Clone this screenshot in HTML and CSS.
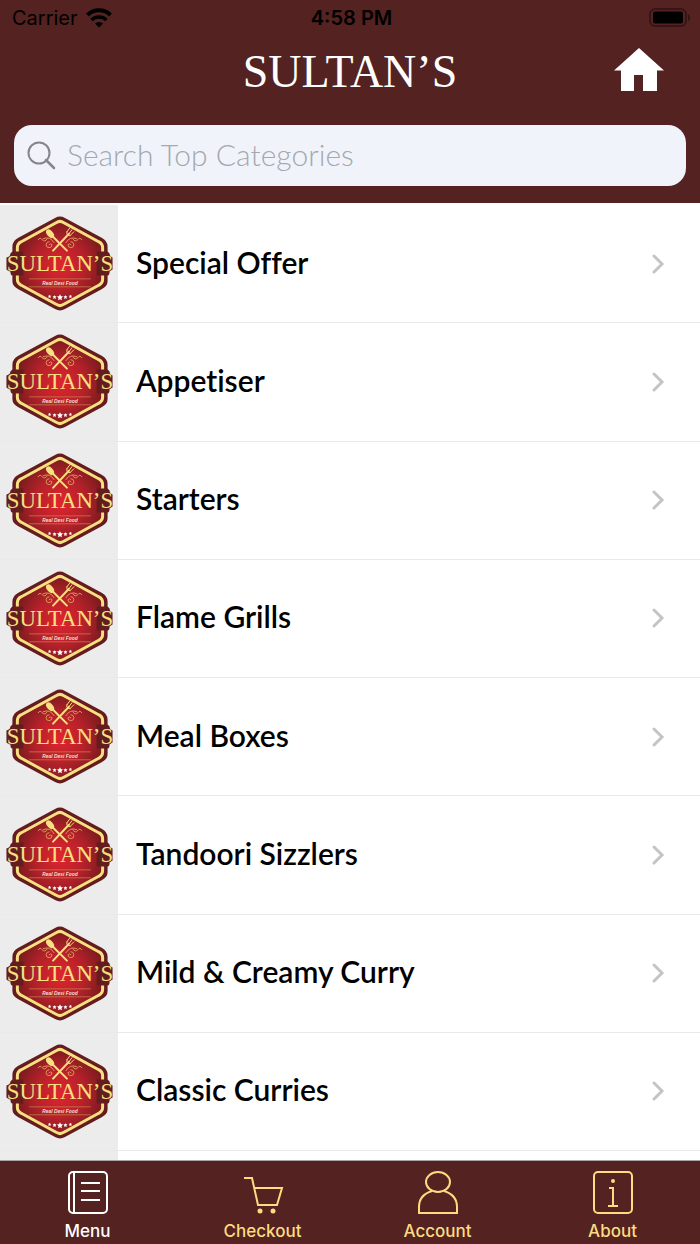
FILE: index.html
```html
<!DOCTYPE html>
<html lang="en">
<head>
    <meta charset="UTF-8">
    <meta name="viewport" content="width=device-width, initial-scale=1.0">
    <title>Sultan's - Menu</title>
    <link rel="stylesheet" href="styles.css">
</head>
<body>

    <header class="header">
        <div class="status">
            <div class="carrier">
                <span>Carrier</span>
                <svg width="26" height="20" viewBox="0 0 26 20">
                    <path d="M1.500 7 A16.500 16.500 0 0 1 24.500 7" fill="none" stroke="#000" stroke-width="4"/>
                    <path d="M5.500 12 A11 11 0 0 1 20.500 12" fill="none" stroke="#000" stroke-width="3.500"/>
                    <path d="M9 15.500 A6 6 0 0 1 17 15.500 L13 19.500 Z"/>
                </svg>
            </div>
            <span class="time">4:58 PM</span>
            <svg class="battery" width="42" height="20" viewBox="0 0 42 20">
                <rect x="1" y="1" width="36" height="17" rx="5" fill="none" stroke="#301314" stroke-width="1.500"/>
                <rect x="4" y="3.500" width="30" height="12" rx="2"/>
                <path d="M39 6 Q41 7 41 9.500 Q41 12 39 13 Z" fill="#301314"/>
            </svg>
        </div>
        <div class="title-bar">
            <h1>SULTAN’S</h1>
            <a class="home" href="#home" aria-label="Home">
                <svg width="50" height="44" viewBox="0 0 50 44">
                    <path d="M25 0 L50 22.500 H43 V43 H29 V27 H20 V43 H7 V22.500 H0 Z" fill="#fff"/>
                </svg>
            </a>
        </div>
        <form class="search">
            <svg width="30" height="30" viewBox="0 0 30 30">
                <circle cx="12" cy="12" r="10.500" fill="none" stroke="#85858a" stroke-width="2"/>
                <path d="M19 19 L27 27" stroke="#85858a" stroke-width="2.500" stroke-linecap="round"/>
            </svg>
            <input type="text" id="search" name="search" placeholder="Search Top Categories" aria-label="Search Top Categories">
        </form>
    </header>

    <main class="list">
        <a class="row" href="#special-offer">
            <span class="thumb">
                <svg viewBox="0 0 118 118">
                    <defs>
                        <radialGradient id="badgeFill" gradientUnits="userSpaceOnUse" cx="60" cy="61" r="50">
                            <stop offset="0" stop-color="#e0252f"/>
                            <stop offset="0.5" stop-color="#b6212a"/>
                            <stop offset="1" stop-color="#6b1a1c"/>
                        </radialGradient>
                    </defs>
                    <g id="badge">
                        <path d="M55 13 Q60 10 65 13 L102 33 Q108 36 108 42 V77 Q108 82 102 85 L65 105 Q60 108 55 105 L18 85 Q12 82 12 77 V42 Q12 36 18 33 Z" fill="#641c1e"/>
                        <path d="M56 18 Q60 15 64 18 L99 37 Q103 39 103 43 V75 Q103 79 99 81 L64 100 Q60 103 56 100 L21 81 Q17 79 17 75 V43 Q17 39 21 37 Z" fill="url(#badgeFill)" stroke="#f8e080" stroke-width="3"/>
                        <path d="M12 47 H23 V71 H12 Q10 71 10 67 Q8 67 6 65 V53 Q10 52 10 49 Z M97 47 H108 L110 49 Q110 52 113 53 V65 Q110 67 110 67 Q110 71 108 71 H97 Z" fill="#641c1e"/>
                        <!-- spoon and fork -->
                        <g stroke="#f8e080" fill="none" stroke-linecap="round">
                            <path d="M52 31 L67 46" stroke-width="2"/>
                            <path d="M53 46 L69 29" stroke-width="2"/>
                            <ellipse cx="50" cy="29" rx="3" ry="5" transform="rotate(-42 50 29)" fill="#f8e080" stroke="none"/>
                            <path d="M67 27 L70 23 M69 29 L72 25 M70 31 L74 27 M67 27 Q66 31 70 31" stroke-width="1"/>
                            <g stroke="#d8955a" stroke-width="1">
                                <path d="M38 35 Q40 32 42 35 Q45 38 47 34 M43 34 Q50 31 54 38 M49 37 a3 3 0 1 0 3 3 a2 2 0 0 0 -3 0"/>
                                <path d="M82 35 Q80 32 78 35 Q75 38 73 34 M77 34 Q70 31 66 38 M71 37 a3 3 0 1 1 -3 3 a2 2 0 0 1 3 0"/>
                            </g>
                        </g>
                        <text class="badge-name" x="60" y="67" text-anchor="middle">SULTAN’S</text>
                        <path d="M29 74.500 H91 M29 82.500 H91" stroke="#c98a50" stroke-width="0.700"/>
                        <text class="badge-tag" x="60" y="81" text-anchor="middle">Real Desi Food</text>
                        <g fill="#fff">
                            <path d="M60 90 L61 92 L63 92 L61.500 94 L62 96 L60 95 L58 96 L58.500 94 L57 92 L59 92 Z"/>
                            <path d="M54.500 91 l.7 1 h1.300 l-1 1.200 .4 1.500 -1.400 -.7 -1.400 .7 .4 -1.500 -1 -1.200 h1.300 Z M65.500 91 l.7 1 h1.300 l-1 1.200 .4 1.500 -1.400 -.7 -1.400 .7 .4 -1.500 -1 -1.200 h1.300 Z M49.500 90.500 l.6 1 h1.200 l-1 1 .4 1.300 -1.200 -.6 -1.200 .6 .4 -1.300 -1 -1 h1.200 Z M70.500 90.500 l.6 1 h1.200 l-1 1 .4 1.300 -1.200 -.6 -1.200 .6 .4 -1.300 -1 -1 h1.200 Z"/>
                        </g>
                    </g>
                </svg>
            </span>
            <span class="name">Special Offer</span>
            <svg class="arrow" viewBox="0 0 14 22"><path id="chevron" d="M3 3 L11 11 L3 19"/></svg>
        </a>
        <a class="row" href="#appetiser">
            <span class="thumb"><svg viewBox="0 0 118 118"><use href="#badge"/></svg></span>
            <span class="name">Appetiser</span>
            <svg class="arrow" viewBox="0 0 14 22"><use href="#chevron"/></svg>
        </a>
        <a class="row" href="#starters">
            <span class="thumb"><svg viewBox="0 0 118 118"><use href="#badge"/></svg></span>
            <span class="name">Starters</span>
            <svg class="arrow" viewBox="0 0 14 22"><use href="#chevron"/></svg>
        </a>
        <a class="row" href="#flame-grills">
            <span class="thumb"><svg viewBox="0 0 118 118"><use href="#badge"/></svg></span>
            <span class="name">Flame Grills</span>
            <svg class="arrow" viewBox="0 0 14 22"><use href="#chevron"/></svg>
        </a>
        <a class="row" href="#meal-boxes">
            <span class="thumb"><svg viewBox="0 0 118 118"><use href="#badge"/></svg></span>
            <span class="name">Meal Boxes</span>
            <svg class="arrow" viewBox="0 0 14 22"><use href="#chevron"/></svg>
        </a>
        <a class="row" href="#tandoori-sizzlers">
            <span class="thumb"><svg viewBox="0 0 118 118"><use href="#badge"/></svg></span>
            <span class="name">Tandoori Sizzlers</span>
            <svg class="arrow" viewBox="0 0 14 22"><use href="#chevron"/></svg>
        </a>
        <a class="row" href="#mild-creamy-curry">
            <span class="thumb"><svg viewBox="0 0 118 118"><use href="#badge"/></svg></span>
            <span class="name">Mild &amp; Creamy Curry</span>
            <svg class="arrow" viewBox="0 0 14 22"><use href="#chevron"/></svg>
        </a>
        <a class="row" href="#classic-curries">
            <span class="thumb"><svg viewBox="0 0 118 118"><use href="#badge"/></svg></span>
            <span class="name">Classic Curries</span>
            <svg class="arrow" viewBox="0 0 14 22"><use href="#chevron"/></svg>
        </a>
    </main>
    <div class="next-row"></div>

    <nav class="tabs">
        <a class="tab active" href="#menu">
            <svg viewBox="0 0 42 44">
                <rect x="2" y="1" width="38" height="41" rx="4"/>
                <path d="M7 1 V42 M14 12 H33 M14 20 H33 M14 29 H33"/>
            </svg>
            Menu
        </a>
        <a class="tab" href="#checkout">
            <svg viewBox="0 0 42 44">
                <path d="M2 7 H10 L16 34 H35 L40 17 H12"/>
                <circle class="dot" cx="18" cy="40" r="2.500"/>
                <circle class="dot" cx="31" cy="40" r="2.500"/>
            </svg>
            Checkout
        </a>
        <a class="tab" href="#account">
            <svg viewBox="0 0 42 44">
                <ellipse cx="21" cy="11" rx="12" ry="10"/>
                <path d="M15 20 Q2 24 2 36 V42 H40 V36 Q40 24 27 20"/>
            </svg>
            Account
        </a>
        <a class="tab" href="#about">
            <svg viewBox="0 0 42 44">
                <rect x="2" y="1" width="38" height="41" rx="4"/>
                <path d="M17 17 H21 V35 M16 35 H26"/>
                <circle class="dot" cx="21" cy="10" r="2"/>
            </svg>
            About
        </a>
    </nav>

</body>
</html>
```

FILE: styles.css
```css
* {
    box-sizing: border-box;
}
body {
    font-family: Lato, "Open Sans", sans-serif;
    background-color: #fff;
    margin: 0;
    min-height: 100vh;
    display: flex;
    flex-direction: column;
}
a {
    color: inherit;
    text-decoration: none;
}
svg {
    display: block;
    flex-shrink: 0;
}

/* header */
.header {
    background-color: #532221;
    padding-bottom: 17px;
}
.status {
    display: grid;
    grid-template-columns: 1fr auto 1fr;
    align-items: center;
    height: 36px;
    padding: 0 9px 0 12px;
    font-family: Inter, sans-serif;
    font-size: 20px;
    color: #000;
}
.carrier {
    display: flex;
    align-items: center;
    gap: 8px;
}
.time {
    font-weight: 600;
}
.battery {
    justify-self: end;
}
.title-bar {
    display: grid;
    grid-template-columns: 1fr auto 1fr;
    align-items: center;
    height: 72px;
    padding: 0 36px;
}
h1 {
    grid-column: 2;
    margin: 0;
    color: #fff;
    font-family: "Liberation Serif", serif;
    font-size: 46px;
    font-weight: normal;
    line-height: 72px;
}
.home {
    justify-self: end;
    padding-bottom: 4px;
}
.search {
    display: flex;
    align-items: center;
    gap: 10px;
    height: 61px;
    margin: 17px 14px 0;
    padding: 0 13px;
    background-color: #f0f4fa;
    border-radius: 18px;
}
.search input {
    flex: 1;
    min-width: 0;
    padding: 0 0 4px;
    border: none;
    outline: none;
    background: none;
    font-family: inherit;
    font-size: 30px;
    font-weight: 300;
}
.search input::placeholder {
    color: #a4a8b0;
}

/* categories */
.list {
    flex: 1;
    display: grid;
    grid-auto-rows: minmax(118px, 1fr);
    padding-top: 2px;
}
.row {
    display: flex;
    align-items: center;
    padding-right: 35px;
    border-bottom: 1px solid #e9e9e9;
    background: linear-gradient(to right, #ececec 118px, #fff 118px);
}
.thumb svg {
    width: 118px;
    height: 117px;
}
.badge-name {
    font-family: "Liberation Serif", serif;
    font-size: 23px;
    fill: #f8e080;
}
.badge-tag {
    font-family: "Liberation Sans", sans-serif;
    font-size: 5px;
    font-style: italic;
    font-weight: bold;
    fill: #f3dcc8;
}
.name {
    flex: 1;
    padding: 0 0 4px 18px;
    font-size: 30px;
    font-weight: 600;
    font-variant-ligatures: none;
    color: #000;
}
.arrow {
    width: 14px;
    height: 22px;
    fill: none;
    stroke: #c4c4c6;
    stroke-width: 3;
    stroke-linecap: round;
}
.next-row {
    height: 9px;
    background: linear-gradient(to right, #ececec 118px, #fff 118px);
}

/* bottom tabs */
.tabs {
    display: grid;
    grid-template-columns: repeat(4, 1fr);
    height: 84px;
    padding-top: 10px;
    border-top: 1px solid #a9a4a6;
    background-color: #532221;
    color: #fbdc80;
}
.tab {
    display: flex;
    flex-direction: column;
    align-items: center;
    gap: 4px;
    font-family: Inter, sans-serif;
    font-size: 17px;
    font-weight: 500;
    line-height: 24px;
}
.tab.active {
    color: #fff;
}
.tab svg {
    width: 42px;
    height: 44px;
    fill: none;
    stroke: currentColor;
    stroke-width: 2;
}
.tab .dot {
    fill: currentColor;
    stroke: none;
}
```
